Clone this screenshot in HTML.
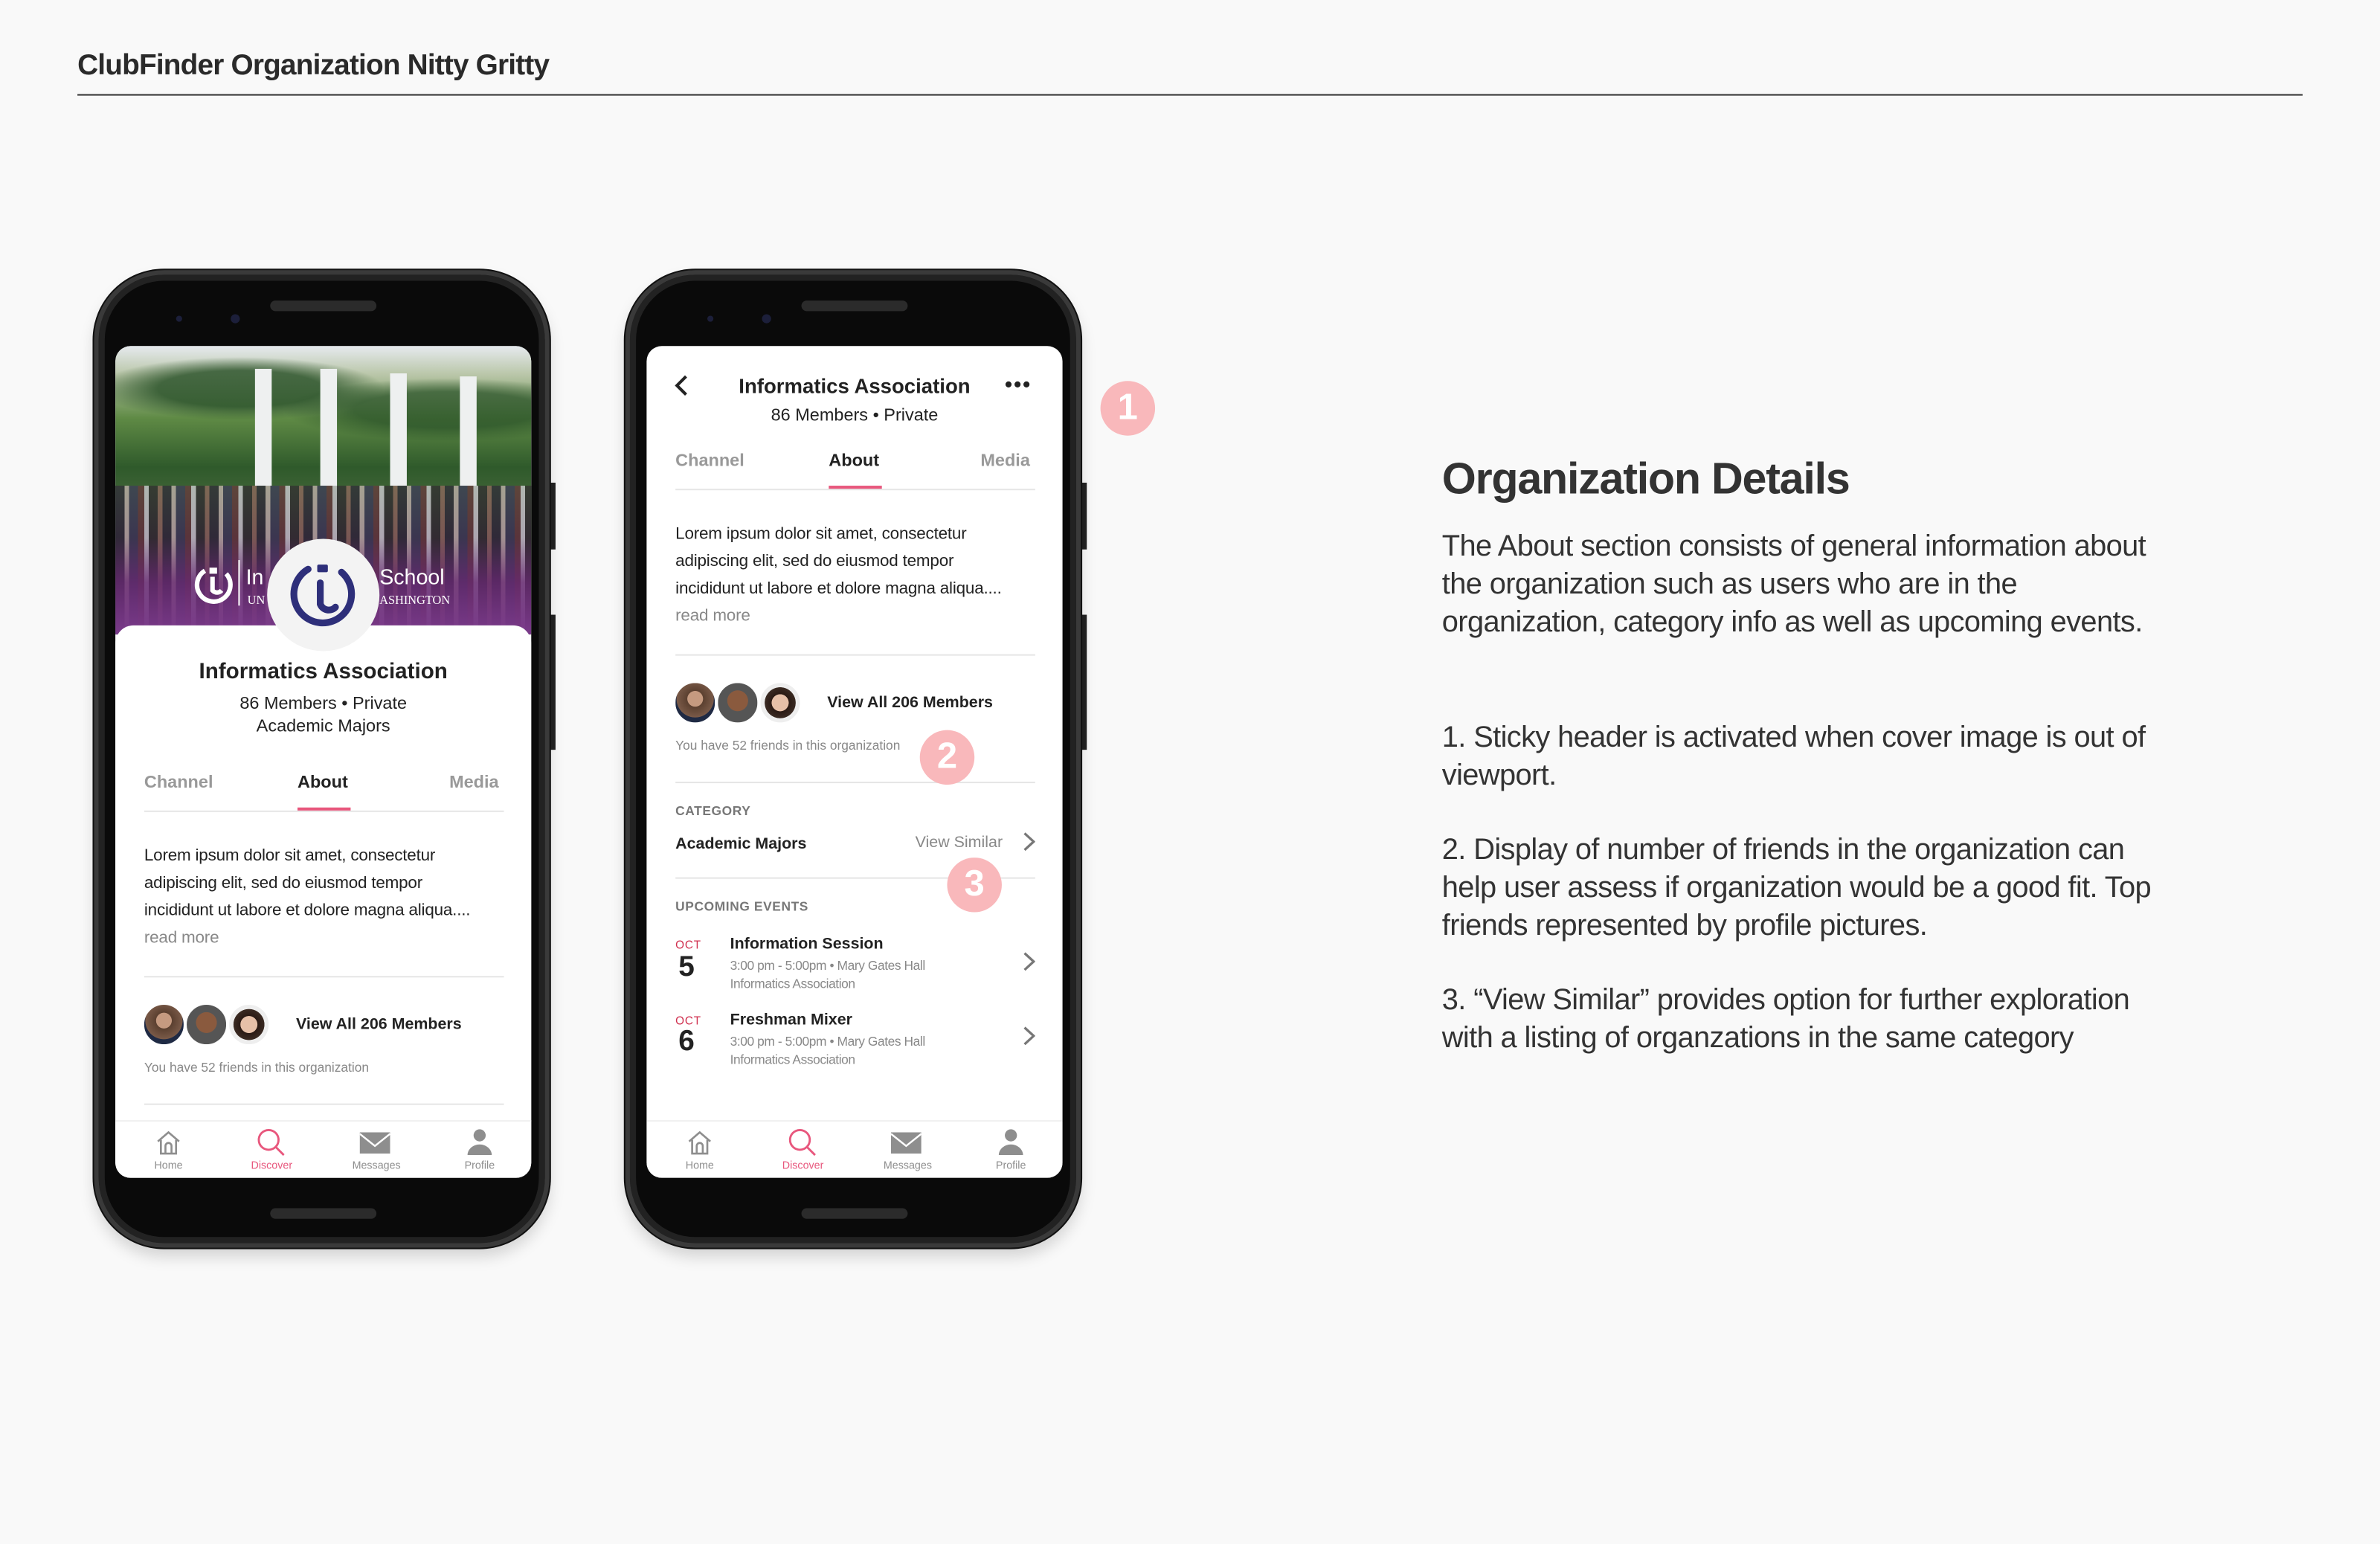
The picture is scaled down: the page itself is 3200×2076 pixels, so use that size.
<!DOCTYPE html>
<html><head><meta charset="utf-8">
<style>
*{margin:0;padding:0;box-sizing:border-box}
html,body{width:3200px;height:2076px;overflow:hidden;background:#f9f9f9}
body{font-family:"Liberation Sans",Arial,sans-serif;color:#333}
#w{position:absolute;left:0;top:0;width:1568px;height:1017.2px;transform:scale(2.04082);transform-origin:0 0}
.a{position:absolute;white-space:nowrap}
.phone{position:absolute;top:178px;width:300px;height:644px;border-radius:46px;background:#0a0a0a;border:3px solid #3a3a3a;box-shadow:0 0 0 1px #111,0 6px 10px rgba(0,0,0,.15), inset 0 0 0 4px #222}
.btn{position:absolute;background:#222;width:5px}
.screen{position:absolute;left:11px;top:47px;width:274px;height:548px;background:#fff;border-radius:10px;overflow:hidden}
.slot{position:absolute;left:113px;width:70px;height:7px;border-radius:4px;background:#2b2b2b}
.cam{position:absolute;width:6px;height:6px;border-radius:50%;background:#1c1f3a}
.c{text-align:center}
.line{position:absolute;height:1px;background:#e6e6e6}
.tb{position:absolute;left:0;top:510px;width:274px;height:38px;background:#fff;border-top:1px solid #f0f0f0}
.tb .l{position:absolute;top:26px;font-size:7px;color:#8e8e8e;transform:translateX(-50%)}
.av{position:absolute;width:28px;height:28px;border-radius:50%;border:1px solid #fff}
.badge{position:absolute;width:36px;height:36px;border-radius:50%;background:#f9b8bb;color:#fff;font-weight:bold;font-size:24px;text-align:center;line-height:36px}
.rt{position:absolute;left:950px;font-size:19.5px;color:#333;letter-spacing:-.3px;white-space:nowrap}
</style></head><body><div id="w">

<div class="a" style="left:51px;top:33px;font-size:19px;font-weight:bold;color:#2a2a2a;letter-spacing:-.4px">ClubFinder Organization Nitty Gritty</div>
<div class="a" style="left:51px;top:62px;width:1466px;height:1px;background:#333"></div>

<!-- PHONE 1 -->
<div class="btn" style="left:361px;top:318px;height:44px"></div>
<div class="btn" style="left:361px;top:405px;height:89px"></div>
<div class="phone" style="left:62px">
  <div class="slot" style="top:17px"></div>
  <div class="slot" style="top:615px"></div>
  <div class="cam" style="left:51px;top:27px;width:4px;height:4px"></div>
  <div class="cam" style="left:87px;top:26px"></div>
  <div class="screen">
    <div class="a" style="left:0;top:0;width:274px;height:190px;background:linear-gradient(180deg,#e6eaee 0%,#b9c6a8 10%,#5f8a45 25%,#2f5a2b 42%,#45663a 55%)"></div>
    <div class="a" style="left:0;top:0;width:274px;height:70px;background:radial-gradient(ellipse at 30% 40%,rgba(40,80,40,.8) 0 20%,transparent 35%),radial-gradient(ellipse at 80% 60%,rgba(40,80,40,.7) 0 20%,transparent 35%)"></div>
    <div class="a" style="left:92px;top:15px;width:11px;height:95px;background:#eef0f0"></div>
    <div class="a" style="left:135px;top:15px;width:11px;height:95px;background:#eef0f0"></div>
    <div class="a" style="left:181px;top:18px;width:11px;height:92px;background:#eef0f0"></div>
    <div class="a" style="left:227px;top:20px;width:11px;height:92px;background:#eef0f0"></div>
    <div class="a" style="left:0;top:92px;width:274px;height:98px;background:repeating-linear-gradient(90deg,#2a2a36 0 6px,#d8c8c0 6px 9px,#3a3d5a 9px 15px,#6a3a3a 15px 19px,#e8e8ee 19px 22px,#2c2c2c 22px 28px,#9a7060 28px 31px)"></div>
    <div class="a" style="left:0;top:92px;width:274px;height:98px;background:linear-gradient(180deg,rgba(70,90,60,.35) 0%,rgba(60,40,60,.35) 35%,rgba(100,40,110,.85) 65%,#7a3a8a 100%)"></div>
    <svg class="a" style="left:50px;top:142px" width="30" height="30" viewBox="0 0 30 30"><path d="M9 6 A11 11 0 1 0 23 8" fill="none" stroke="#fff" stroke-width="3"/><path d="M14 10 v9 a4 4 0 0 0 6 0" fill="none" stroke="#fff" stroke-width="3"/><rect x="12" y="4" width="5" height="4" fill="#fff"/></svg>
    <div class="a" style="left:81px;top:141px;width:1px;height:30px;background:#fff"></div>
    <div class="a" style="left:86px;top:144px;font-size:14px;color:#fff">In</div>
    <div class="a" style="left:174px;top:144px;font-size:14px;color:#fff">School</div>
    <div class="a" style="left:87px;top:163px;font-size:8px;color:#fff;font-family:'Liberation Serif',serif">UN</div>
    <div class="a" style="left:174px;top:163px;font-size:8px;color:#fff;font-family:'Liberation Serif',serif">ASHINGTON</div>
    <div class="a" style="left:0;top:184px;width:274px;height:380px;background:#fff;border-radius:12px 12px 0 0"></div>
    <div class="a" style="left:100px;top:127px;width:74px;height:74px;border-radius:50%;background:#f3f3f3"></div>
    <svg class="a" style="left:112px;top:139px" width="50" height="50" viewBox="0 0 50 50"><path d="M15 8 A19 19 0 1 0 37 10" fill="none" stroke="#2e2f7a" stroke-width="4.5" stroke-linecap="round"/><path d="M23 17 v14 a6 6 0 0 0 10 2" fill="none" stroke="#2e2f7a" stroke-width="4.5" stroke-linecap="round"/><rect x="21" y="5" width="7" height="5" rx="1" fill="#2e2f7a"/></svg>
    <div class="a c" style="left:0;top:207px;width:274px;font-size:14.5px;font-weight:bold;color:#222">Informatics Association</div>
    <div class="a c" style="left:0;top:230px;width:274px;font-size:11.5px;color:#222">86 Members • Private</div>
    <div class="a c" style="left:0;top:245px;width:274px;font-size:11.5px;color:#222">Academic Majors</div>
    <div class="a" style="left:19px;top:282px;font-size:11.5px;font-weight:bold;color:#999">Channel</div>
    <div class="a" style="left:120px;top:282px;font-size:11.5px;font-weight:bold;color:#222">About</div>
    <div class="a" style="left:220px;top:282px;font-size:11.5px;font-weight:bold;color:#999">Media</div>
    <div class="line" style="left:19px;top:306px;width:237px"></div>
    <div class="a" style="left:120px;top:304px;width:35px;height:2px;background:#e8577d"></div>
    <div class="a" style="left:19px;top:327px;font-size:11px;line-height:18px;color:#222;letter-spacing:-.1px">Lorem ipsum dolor sit amet, consectetur<br>adipiscing elit, sed do eiusmod tempor<br>incididunt ut labore et dolore magna aliqua....<br><span style="color:#888">read more</span></div>
    <div class="line" style="left:19px;top:415px;width:237px"></div>
    <div class="av" style="left:18px;top:433px;background:radial-gradient(circle at 50% 40%,#c59a80 25%,#5b4030 26%,#7a5a48 60%,#1f2a44 61%)"></div>
    <div class="av" style="left:46px;top:433px;background:radial-gradient(circle at 50% 45%,#8a5a3e 35%,#555 36%)"></div>
    <div class="av" style="left:74px;top:433px;background:radial-gradient(circle at 50% 50%,#e6c0a8 30%,#2a1a14 31%,#3a2a22 55%,#eee 56%)"></div>
    <div class="a" style="left:119px;top:441px;font-size:10.5px;font-weight:bold;color:#222">View All 206 Members</div>
    <div class="a" style="left:19px;top:470px;font-size:8.5px;color:#888">You have 52 friends in this organization</div>
    <div class="line" style="left:19px;top:499px;width:237px"></div>
    <div class="tb">
      <svg class="a" style="left:26px;top:5px" width="18" height="17" viewBox="0 0 18 17"><path d="M2 8 L9 2 L16 8 M4 7 V16 H14 V7 M7 16 V11 a2 2 0 0 1 4 0 V16" fill="none" stroke="#8e8e8e" stroke-width="1.3"/></svg>
      <svg class="a" style="left:93px;top:4px" width="20" height="20" viewBox="0 0 20 20"><circle cx="8" cy="8" r="6.5" fill="none" stroke="#e8577d" stroke-width="1.4"/><path d="M12.5 12.5 L18 18" stroke="#e8577d" stroke-width="1.4"/></svg>
      <svg class="a" style="left:161px;top:7px" width="20" height="14" viewBox="0 0 20 14"><rect width="20" height="14" fill="#8e8e8e"/><path d="M0 1 L10 9 L20 1" fill="none" stroke="#fff" stroke-width="1.2"/></svg>
      <svg class="a" style="left:231px;top:4px" width="18" height="18" viewBox="0 0 18 18"><circle cx="9" cy="5" r="4" fill="#8e8e8e"/><path d="M1 18 a8 7 0 0 1 16 0 Z" fill="#8e8e8e"/></svg>
      <div class="l" style="left:35px">Home</div>
      <div class="l" style="left:103px;color:#e8577d">Discover</div>
      <div class="l" style="left:172px">Messages</div>
      <div class="l" style="left:240px">Profile</div>
    </div>
  </div>
</div>

<!-- PHONE 2 -->
<div class="btn" style="left:711px;top:318px;height:44px"></div>
<div class="btn" style="left:711px;top:405px;height:89px"></div>
<div class="phone" style="left:412px">
  <div class="slot" style="top:17px"></div>
  <div class="slot" style="top:615px"></div>
  <div class="cam" style="left:51px;top:27px;width:4px;height:4px"></div>
  <div class="cam" style="left:87px;top:26px"></div>
  <div class="screen">
    <svg class="a" style="left:17px;top:19px" width="12" height="14" viewBox="0 0 12 14"><path d="M9 1 L3 7 L9 13" fill="none" stroke="#222" stroke-width="2"/></svg>
    <div class="a c" style="left:0;top:19px;width:274px;font-size:13.5px;font-weight:bold;color:#222">Informatics Association</div>
    <div class="a" style="left:236px;top:17px;font-size:14px;font-weight:bold;color:#222;letter-spacing:1px">•••</div>
    <div class="a c" style="left:0;top:40px;width:274px;font-size:11.5px;color:#222">86 Members • Private</div>
    <div class="a" style="left:19px;top:70px;font-size:11.5px;font-weight:bold;color:#999">Channel</div>
    <div class="a" style="left:120px;top:70px;font-size:11.5px;font-weight:bold;color:#222">About</div>
    <div class="a" style="left:220px;top:70px;font-size:11.5px;font-weight:bold;color:#999">Media</div>
    <div class="line" style="left:19px;top:94px;width:237px"></div>
    <div class="a" style="left:120px;top:92px;width:35px;height:2px;background:#e8577d"></div>
    <div class="a" style="left:19px;top:115px;font-size:11px;line-height:18px;color:#222;letter-spacing:-.1px">Lorem ipsum dolor sit amet, consectetur<br>adipiscing elit, sed do eiusmod tempor<br>incididunt ut labore et dolore magna aliqua....<br><span style="color:#888">read more</span></div>
    <div class="line" style="left:19px;top:203px;width:237px"></div>
    <div class="av" style="left:18px;top:221px;background:radial-gradient(circle at 50% 40%,#c59a80 25%,#5b4030 26%,#7a5a48 60%,#1f2a44 61%)"></div>
    <div class="av" style="left:46px;top:221px;background:radial-gradient(circle at 50% 45%,#8a5a3e 35%,#555 36%)"></div>
    <div class="av" style="left:74px;top:221px;background:radial-gradient(circle at 50% 50%,#e6c0a8 30%,#2a1a14 31%,#3a2a22 55%,#eee 56%)"></div>
    <div class="a" style="left:119px;top:229px;font-size:10.5px;font-weight:bold;color:#222">View All 206 Members</div>
    <div class="a" style="left:19px;top:258px;font-size:8.5px;color:#888">You have 52 friends in this organization</div>
    <div class="line" style="left:19px;top:287px;width:237px"></div>
    <div class="a" style="left:19px;top:301px;font-size:8.5px;font-weight:bold;color:#777;letter-spacing:.3px">CATEGORY</div>
    <div class="a" style="left:19px;top:322px;font-size:10.5px;font-weight:bold;color:#222">Academic Majors</div>
    <div class="a" style="left:177px;top:321px;font-size:10.5px;color:#888">View Similar</div>
    <svg class="a" style="left:248px;top:320px" width="8" height="13" viewBox="0 0 8 13"><path d="M1 1 L7 6.5 L1 12" fill="none" stroke="#777" stroke-width="1.6"/></svg>
    <div class="line" style="left:19px;top:350px;width:237px"></div>
    <div class="a" style="left:19px;top:364px;font-size:8.5px;font-weight:bold;color:#777;letter-spacing:.3px">UPCOMING EVENTS</div>
    <div class="a" style="left:19px;top:390px;font-size:7.5px;color:#d0304f;letter-spacing:.4px">OCT</div>
    <div class="a" style="left:21px;top:399px;font-size:19px;font-weight:bold;color:#222">5</div>
    <div class="a" style="left:55px;top:388px;font-size:10.5px;font-weight:bold;color:#222">Information Session</div>
    <div class="a" style="left:55px;top:402px;font-size:8.5px;line-height:12px;color:#888;letter-spacing:-.2px">3:00 pm - 5:00pm • Mary Gates Hall<br>Informatics Association</div>
    <svg class="a" style="left:248px;top:399px" width="8" height="13" viewBox="0 0 8 13"><path d="M1 1 L7 6.5 L1 12" fill="none" stroke="#777" stroke-width="1.6"/></svg>
    <div class="a" style="left:19px;top:440px;font-size:7.5px;color:#d0304f;letter-spacing:.4px">OCT</div>
    <div class="a" style="left:21px;top:448px;font-size:19px;font-weight:bold;color:#222">6</div>
    <div class="a" style="left:55px;top:438px;font-size:10.5px;font-weight:bold;color:#222">Freshman Mixer</div>
    <div class="a" style="left:55px;top:452px;font-size:8.5px;line-height:12px;color:#888;letter-spacing:-.2px">3:00 pm - 5:00pm • Mary Gates Hall<br>Informatics Association</div>
    <svg class="a" style="left:248px;top:448px" width="8" height="13" viewBox="0 0 8 13"><path d="M1 1 L7 6.5 L1 12" fill="none" stroke="#777" stroke-width="1.6"/></svg>
    <div class="tb">
      <svg class="a" style="left:26px;top:5px" width="18" height="17" viewBox="0 0 18 17"><path d="M2 8 L9 2 L16 8 M4 7 V16 H14 V7 M7 16 V11 a2 2 0 0 1 4 0 V16" fill="none" stroke="#8e8e8e" stroke-width="1.3"/></svg>
      <svg class="a" style="left:93px;top:4px" width="20" height="20" viewBox="0 0 20 20"><circle cx="8" cy="8" r="6.5" fill="none" stroke="#e8577d" stroke-width="1.4"/><path d="M12.5 12.5 L18 18" stroke="#e8577d" stroke-width="1.4"/></svg>
      <svg class="a" style="left:161px;top:7px" width="20" height="14" viewBox="0 0 20 14"><rect width="20" height="14" fill="#8e8e8e"/><path d="M0 1 L10 9 L20 1" fill="none" stroke="#fff" stroke-width="1.2"/></svg>
      <svg class="a" style="left:231px;top:4px" width="18" height="18" viewBox="0 0 18 18"><circle cx="9" cy="5" r="4" fill="#8e8e8e"/><path d="M1 18 a8 7 0 0 1 16 0 Z" fill="#8e8e8e"/></svg>
      <div class="l" style="left:35px">Home</div>
      <div class="l" style="left:103px;color:#e8577d">Discover</div>
      <div class="l" style="left:172px">Messages</div>
      <div class="l" style="left:240px">Profile</div>
    </div>
  </div>
</div>

<div class="badge" style="left:725px;top:251px">1</div>
<div class="badge" style="left:606px;top:481px">2</div>
<div class="badge" style="left:624px;top:565px">3</div>

<div class="a" style="left:950px;top:300px;font-size:29px;font-weight:bold;color:#333;letter-spacing:-.6px">Organization Details</div>
<div class="rt" style="top:349px">The About section consists of general information about</div>
<div class="rt" style="top:374px">the organization such as users who are in the</div>
<div class="rt" style="top:399px">organization, category info as well as upcoming events.</div>
<div class="rt" style="top:475px">1. Sticky header is activated when cover image is out of</div>
<div class="rt" style="top:500px">viewport.</div>
<div class="rt" style="top:549px">2. Display of number of friends in the organization can</div>
<div class="rt" style="top:574px">help user assess if organization would be a good fit. Top</div>
<div class="rt" style="top:599px">friends represented by profile pictures.</div>
<div class="rt" style="top:648px">3.  “View Similar” provides option for further exploration</div>
<div class="rt" style="top:673px">with a listing of organzations in the same category</div>

</div></body></html>
